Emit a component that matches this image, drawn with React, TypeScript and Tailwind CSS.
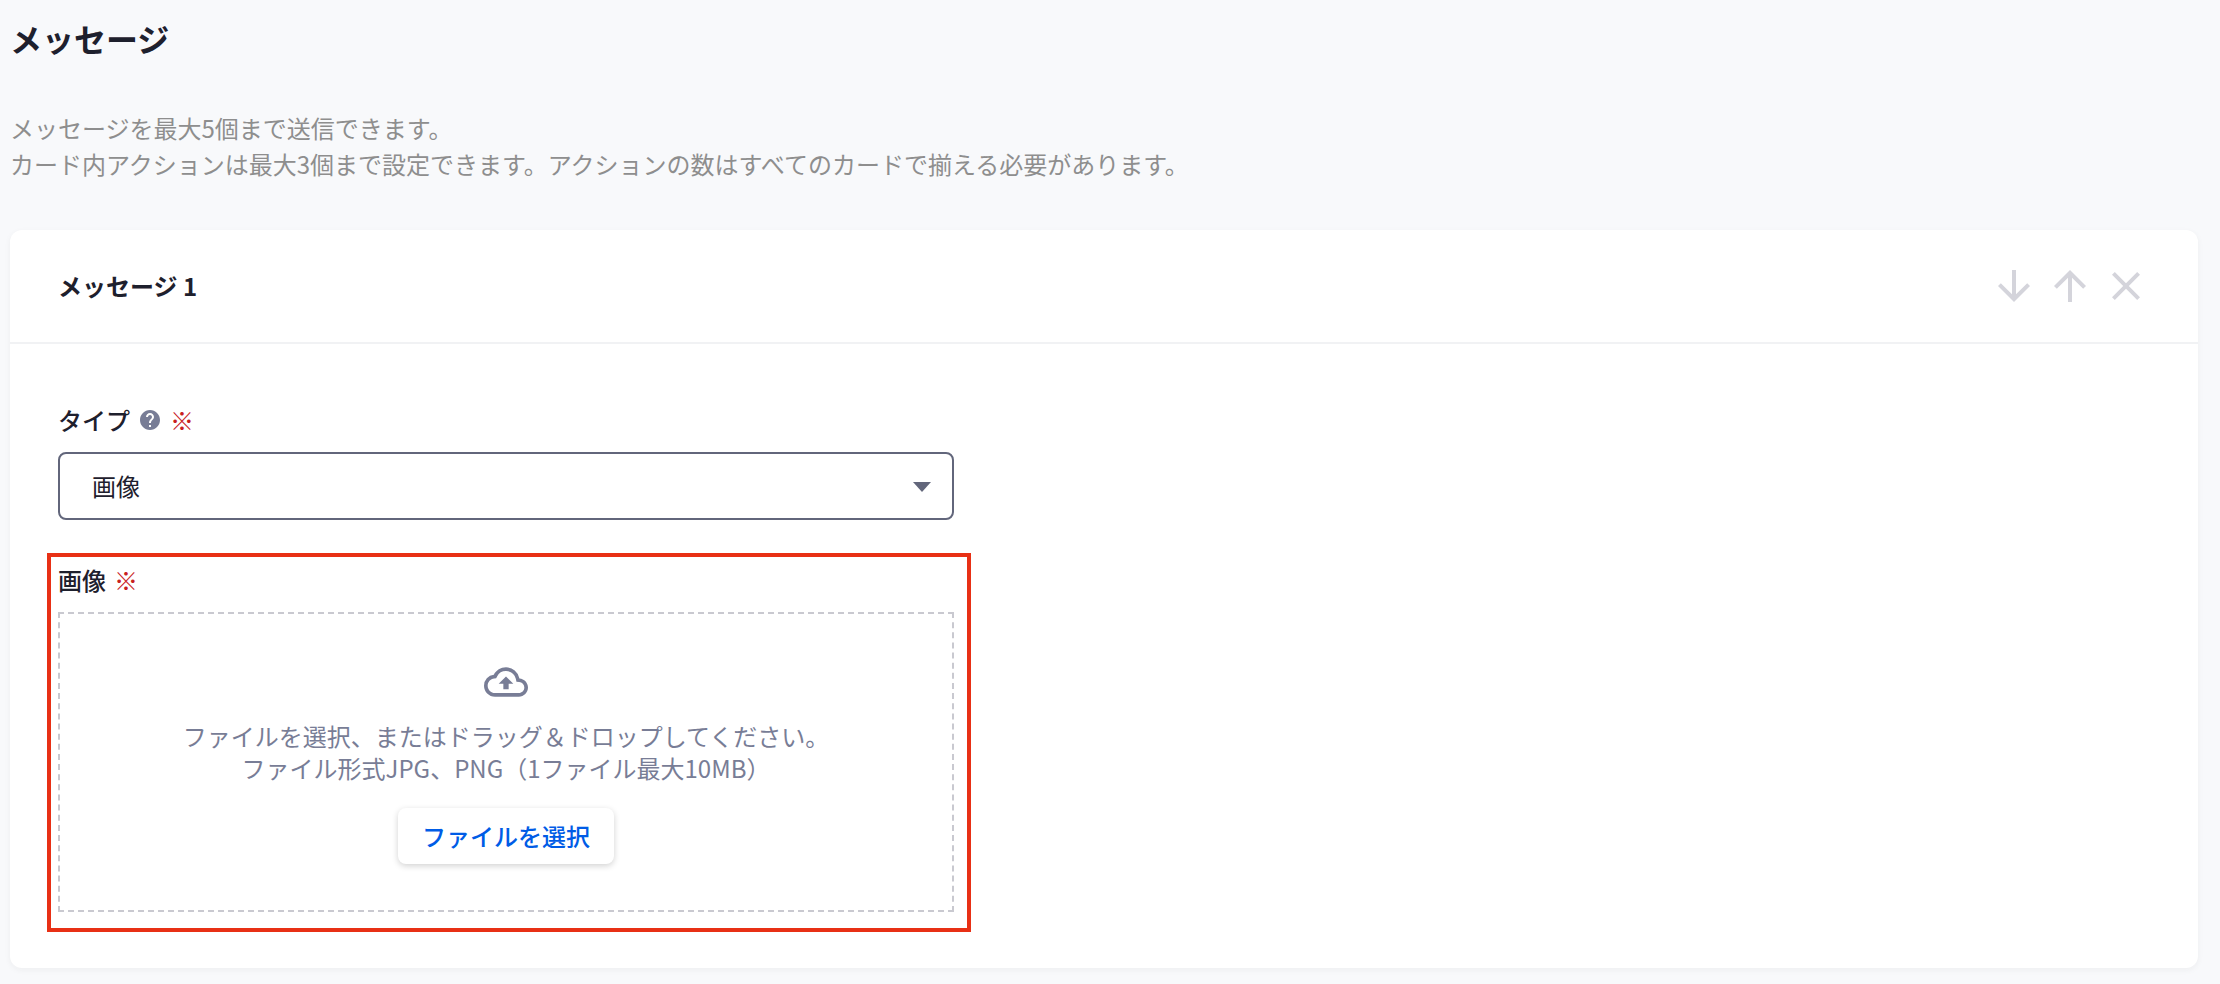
import React from 'react';
import { MdArrowDownward, MdArrowUpward, MdClose, MdHelp, MdOutlineCloudUpload } from 'react-icons/md';

const actions = [
  { label: '下へ移動', Icon: MdArrowDownward },
  { label: '上へ移動', Icon: MdArrowUpward },
  { label: '削除', Icon: MdClose },
];

const Required: React.FC = () => <span className="font-normal text-[#c8201e]">※</span>;

const MessageCard: React.FC = () => (
  <section className="rounded-xl bg-white shadow-[0_2px_6px_rgba(30,32,47,0.05)]">
    <header className="flex h-[114px] items-center justify-between border-b-2 border-[#f1f2f4] px-12">
      <h2 className="text-2xl font-bold">メッセージ 1</h2>
      <div className="flex gap-2 text-[#d4d4db]">
        {actions.map(({ label, Icon }) => (
          <button key={label} type="button" aria-label={label} className="flex size-12 items-center justify-center">
            <Icon size={48} />
          </button>
        ))}
      </div>
    </header>

    <div className="px-12 pt-[58px] pb-14">
      <div className="flex max-w-[896px] flex-col gap-[14px]">
        <div className="flex items-center gap-2 text-2xl/9 font-medium">
          <label htmlFor="type">タイプ</label>
          <MdHelp size={24} className="text-[#787d96]" />
          <Required />
        </div>
        <div className="relative">
          <select
            id="type"
            className="h-[68px] w-full appearance-none rounded-lg border-2 border-[#62667b] bg-white px-8 text-2xl"
          >
            <option>画像</option>
          </select>
          <svg
            viewBox="0 0 18 10"
            className="pointer-events-none absolute top-[30px] right-[23px] h-[10px] w-[18px] fill-[#62667b]"
          >
            <path d="M0 0h18l-9 10z" />
          </svg>
        </div>
      </div>

      <div className="relative mt-[42px] flex max-w-[896px] flex-col gap-[14px]">
        <div className="pointer-events-none absolute -top-[9px] -right-[17px] -bottom-5 -left-[11px] border-4 border-[#e83015]" />
        <div className="flex items-center gap-2 text-2xl/9 font-medium">
          <label htmlFor="image">画像</label>
          <Required />
        </div>
        <div className="flex flex-col items-center border-2 border-dashed border-[#c9c9d0] py-[46px] text-[#787d96]">
          <MdOutlineCloudUpload size={44} />
          <p className="mt-4 text-center text-2xl/8">
            ファイルを選択、またはドラッグ＆ドロップしてください。
            <br />
            ファイル形式JPG、PNG（1ファイル最大10MB）
          </p>
          <button
            id="image"
            type="button"
            className="mt-6 h-14 rounded-lg bg-white px-6 text-2xl font-medium text-[#005ce6] shadow-[0_2px_6px_rgba(0,0,0,0.18)]"
          >
            ファイルを選択
          </button>
        </div>
      </div>
    </div>
  </section>
);

export default function App() {
  return (
    <main
      lang="ja"
      className="min-h-screen bg-[#f8f9fb] pt-[14px] pr-[22px] pb-4 pl-[10px] font-['Noto_Sans_CJK_JP',sans-serif] text-[#1e202d]"
    >
      <h1 className="text-[32px]/[48px] font-bold">メッセージ</h1>
      <p className="my-12 text-2xl/9 text-[#8e8e8e]">
        メッセージを最大5個まで送信できます。
        <br />
        カード内アクションは最大3個まで設定できます。アクションの数はすべてのカードで揃える必要があります。
      </p>
      <MessageCard />
    </main>
  );
}
